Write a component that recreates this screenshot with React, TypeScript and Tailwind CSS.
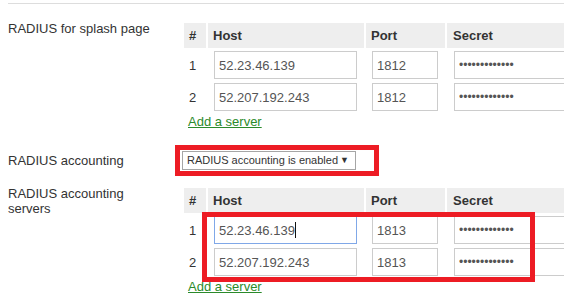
import React from "react";

type Server = { host: string; port: string; focused?: boolean };

const splashServers: Server[] = [
  { host: "52.23.46.139", port: "1812" },
  { host: "52.207.192.243", port: "1812" },
];

const accountingServers: Server[] = [
  { host: "52.23.46.139", port: "1813", focused: true },
  { host: "52.207.192.243", port: "1813" },
];

function ServerTable({ rows }: { rows: Server[] }) {
  return (
    <div className="shrink-0">
      <table className="border-separate border-spacing-[2px]">
        <thead>
          <tr>
            <th className="w-[22px] min-w-[22px] h-[25px] px-[5px] bg-[#eee] text-left font-bold">#</th>
            <th className="h-[25px] px-[5px] bg-[#eee] text-left font-bold">Host</th>
            <th className="h-[25px] px-[5px] bg-[#eee] text-left font-bold">Port</th>
            <th className="h-[25px] px-[6px] bg-[#eee] text-left font-bold">Secret</th>
          </tr>
        </thead>
        <tbody>
          {rows.map((r, i) => (
            <tr key={i}>
              <td className="px-[5px] py-[1px]">{i + 1}</td>
              <td className="pl-[6px] pr-[7px] py-[1px]">
                {r.focused ? (
                  <div className="h-[28px] w-[143px] border border-[#80a8e8] px-[4px] flex items-center text-[#555] bg-white">
                    {r.host}
                    <span className="w-px h-[16px] bg-[#111]" />
                  </div>
                ) : (
                  <input
                    readOnly
                    value={r.host}
                    className="block h-[28px] w-[143px] border border-[#ccc] px-[4px] text-[#555] bg-white outline-none"
                  />
                )}
              </td>
              <td className="pl-[6px] pr-[7px] py-[1px]">
                <input
                  readOnly
                  value={r.port}
                  className="block h-[28px] w-[66px] border border-[#ccc] px-[4px] text-[#555] bg-white outline-none"
                />
              </td>
              <td className="pl-[7px] pr-[7px] py-[1px]">
                <input
                  readOnly
                  type="password"
                  value="aaaaaaaaaaaaa"
                  className="block h-[28px] w-[170px] border border-[#ccc] px-[4px] text-[12px] text-[#555] bg-white outline-none"
                />
              </td>
            </tr>
          ))}
        </tbody>
      </table>
      <a href="#" className="ml-[6px] text-[#2b8a2b] underline">
        Add a server
      </a>
    </div>
  );
}

export default function App() {
  return (
    <div className="w-[564px] h-[301px] overflow-hidden bg-white font-['Liberation_Sans',Arial,sans-serif] text-[13px] leading-[15px] text-[#333]">
      <div className="ml-2 mt-[3px] border-t border-[#ddd] pt-[17px]">
        {/* RADIUS for splash page */}
        <div className="flex">
          <div className="w-[174px] pr-[24px] shrink-0">RADIUS for splash page</div>
          <ServerTable rows={splashServers} />
        </div>

        {/* RADIUS accounting */}
        <div className="flex items-center h-[20px] mt-[21px]">
          <div className="w-[174px] pr-[24px] shrink-0">RADIUS accounting</div>
          <div className="relative shrink-0">
            <div className="flex items-center justify-between w-[174px] h-[19px] border border-[#a6a6a6] bg-white pl-[4px] pr-[6px] text-[11px] leading-[13px] text-[#333] whitespace-nowrap">
              <span>RADIUS accounting is enabled</span>
              <span className="text-[9px]">▼</span>
            </div>
            <div className="absolute left-[-7px] top-[-6px] w-[204px] h-[31px] border-[5px] border-[#ed1c24]" />
          </div>
        </div>

        {/* RADIUS accounting servers */}
        <div className="flex mt-[16px]">
          <div className="w-[174px] pr-[24px] shrink-0">RADIUS accounting servers</div>
          <div className="relative shrink-0">
            <ServerTable rows={accountingServers} />
            <div className="absolute left-[20px] top-[26px] w-[333px] h-[70px] border-[5px] border-[#ed1c24]" />
          </div>
        </div>
      </div>
    </div>
  );
}
